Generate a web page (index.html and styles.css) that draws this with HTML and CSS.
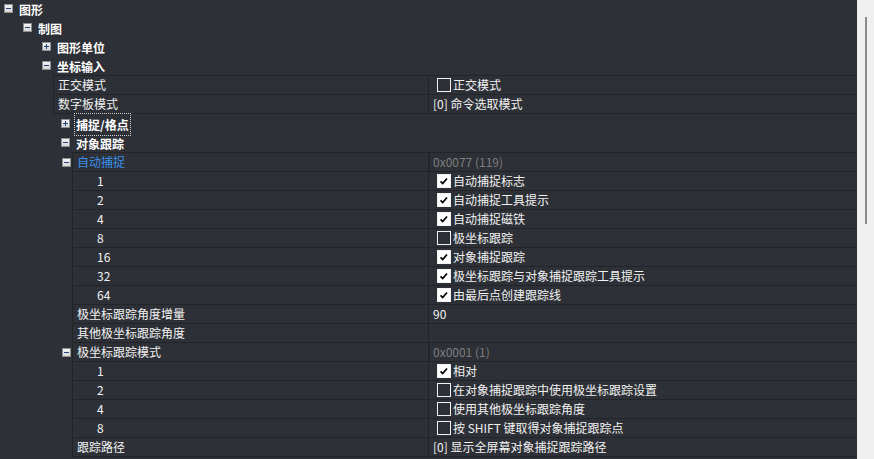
FILE: index.html
```html
<!DOCTYPE html>
<html lang="zh-CN">
<head>
    <meta charset="UTF-8">
    <title>选项</title>
    <link rel="stylesheet" href="styles.css">
</head>
<body>
    <div class="app">
        <div class="tree">
            <!-- categories -->
            <div class="cat l0"><span class="tg"></span><span class="cap">图形</span></div>
            <div class="cat l1"><span class="tg"></span><span class="cap">制图</span></div>
            <div class="cat l2"><span class="tg plus"></span><span class="cap">图形单位</span></div>
            <div class="cat l2"><span class="tg"></span><span class="cap">坐标输入</span></div>

            <div class="grid g2">
                <div class="row"><div class="k">正交模式</div><div class="v"><span class="cb"></span>正交模式</div></div>
                <div class="row"><div class="k">数字板模式</div><div class="v">[0] 命令选取模式</div></div>
            </div>

            <div class="cat l3"><span class="tg plus"></span><span class="cap focus">捕捉/格点</span></div>
            <div class="cat l3"><span class="tg"></span><span class="cap">对象跟踪</span></div>

            <div class="grid g3">
                <div class="row"><div class="k"><span class="tg out"></span><span class="blue">自动捕捉</span></div><div class="v dim">0x0077 (119)</div></div>
                <div class="row"><div class="k sub">1</div><div class="v"><span class="cb on"><svg viewBox="0 0 14 14"><path d="M3 7.5l2.5 2.5 5-6"/></svg></span>自动捕捉标志</div></div>
                <div class="row"><div class="k sub">2</div><div class="v"><span class="cb on"><svg viewBox="0 0 14 14"><path d="M3 7.5l2.5 2.5 5-6"/></svg></span>自动捕捉工具提示</div></div>
                <div class="row"><div class="k sub">4</div><div class="v"><span class="cb on"><svg viewBox="0 0 14 14"><path d="M3 7.5l2.5 2.5 5-6"/></svg></span>自动捕捉磁铁</div></div>
                <div class="row"><div class="k sub">8</div><div class="v"><span class="cb"></span>极坐标跟踪</div></div>
                <div class="row"><div class="k sub">16</div><div class="v"><span class="cb on"><svg viewBox="0 0 14 14"><path d="M3 7.5l2.5 2.5 5-6"/></svg></span>对象捕捉跟踪</div></div>
                <div class="row"><div class="k sub">32</div><div class="v"><span class="cb on"><svg viewBox="0 0 14 14"><path d="M3 7.5l2.5 2.5 5-6"/></svg></span>极坐标跟踪与对象捕捉跟踪工具提示</div></div>
                <div class="row"><div class="k sub">64</div><div class="v"><span class="cb on"><svg viewBox="0 0 14 14"><path d="M3 7.5l2.5 2.5 5-6"/></svg></span>由最后点创建跟踪线</div></div>
                <div class="row"><div class="k">极坐标跟踪角度增量</div><div class="v">90</div></div>
                <div class="row"><div class="k">其他极坐标跟踪角度</div><div class="v"></div></div>
                <div class="row"><div class="k"><span class="tg out"></span>极坐标跟踪模式</div><div class="v dim">0x0001 (1)</div></div>
                <div class="row"><div class="k sub">1</div><div class="v"><span class="cb on"><svg viewBox="0 0 14 14"><path d="M3 7.5l2.5 2.5 5-6"/></svg></span>相对</div></div>
                <div class="row"><div class="k sub">2</div><div class="v"><span class="cb"></span>在对象捕捉跟踪中使用极坐标跟踪设置</div></div>
                <div class="row"><div class="k sub">4</div><div class="v"><span class="cb"></span>使用其他极坐标跟踪角度</div></div>
                <div class="row"><div class="k sub">8</div><div class="v"><span class="cb"></span>按 SHIFT 键取得对象捕捉跟踪点</div></div>
                <div class="row"><div class="k">跟踪路径</div><div class="v">[0] 显示全屏幕对象捕捉跟踪路径</div></div>
            </div>
        </div>
        <div class="scroll"><div class="thumb"></div></div>
    </div>
</body>
</html>
```

FILE: styles.css
```css
body {
    margin: 0;
    background: #2d3036;
    font-family: "Noto Sans CJK SC", "Noto Sans", sans-serif;
    font-size: 12px;
    color: #f2f2f2;
    overflow: hidden;
}
.app {
    display: flex;
    height: 459px;
}
.tree {
    width: 857px;
    margin-top: -1px;
}
.scroll {
    width: 17px;
    background: #f0f0f0;
    padding-top: 17px;
    box-sizing: border-box;
}
.thumb {
    width: 2px;
    height: 207px;
    margin-left: 8px;
    background: #8b8b8b;
}

/* category rows */
.cat {
    height: 19px;
    display: flex;
    align-items: center;
    line-height: 19px;
}
.cat .cap {
    font-weight: bold;
    color: #fff;
    margin-top: 1px;
}
.l0 { padding-left: 4px; }
.l1 { padding-left: 23px; }
.l2 { padding-left: 42px; }
.l3 { padding-left: 61px; }
.focus {
    outline: 1px dotted #d0d0d0;
    outline-offset: 1px;
}

/* expander box */
.tg {
    position: relative;
    width: 9px;
    height: 9px;
    box-sizing: border-box;
    border: 1px solid #8f8f8f;
    background: linear-gradient(#f4f4f4, #d8d8d8);
    margin-right: 6px;
    flex: none;
}
.tg::before {
    content: "";
    position: absolute;
    left: 1px;
    top: 3px;
    width: 5px;
    height: 1px;
    background: #23407a;
}
.tg.plus::after {
    content: "";
    position: absolute;
    left: 3px;
    top: 1px;
    width: 1px;
    height: 5px;
    background: #23407a;
}
.tg.out {
    margin-left: -15px;
    margin-right: 6px;
}

/* property grid */
.grid {
    border-left: 1px solid #222428;
    border-bottom: 1px solid #222428;
}
.g2 { margin-left: 53px; }
.g3 { margin-left: 72px; }
.row {
    height: 19px;
    box-sizing: border-box;
    border-top: 1px solid #222428;
    display: flex;
    line-height: 18px;
}
.k {
    box-sizing: border-box;
    border-right: 1px solid #222428;
    padding-left: 4px;
    display: flex;
    align-items: center;
    white-space: nowrap;
}
.g2 .k { width: 375px; }
.g3 .k { width: 356px; }
.k.sub { padding-left: 24px; }
.blue { color: #3a90ec; }
.v {
    flex: 1;
    padding-left: 4px;
    display: flex;
    align-items: center;
    white-space: nowrap;
}
.v.dim {
    color: #7e7e7e;
    box-shadow: inset 1px 0 #222428;
}

/* checkbox */
.cb {
    width: 14px;
    height: 14px;
    box-sizing: border-box;
    border: 1px solid #f2f2f2;
    margin-left: 4px;
    margin-right: 2px;
    flex: none;
}
.cb.on {
    background: #fff;
}
.cb svg {
    display: block;
    width: 12px;
    height: 12px;
}
.cb path {
    fill: none;
    stroke: #000;
    stroke-width: 2;
}
```
